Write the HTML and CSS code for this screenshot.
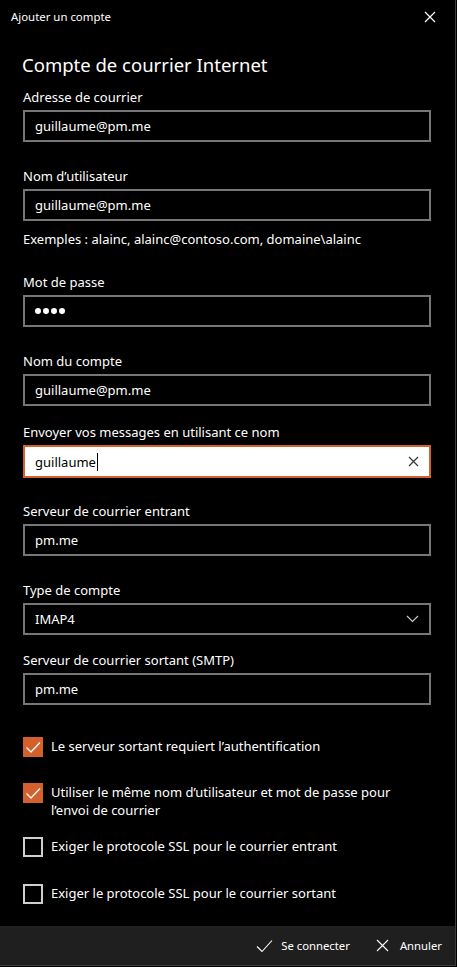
FILE: index.html
```html
<!DOCTYPE html>
<html lang="fr">
<head>
<meta charset="utf-8">
<title>Ajouter un compte</title>
<link rel="stylesheet" href="styles.css">
</head>
<body>
<div class="dialog">
  <div class="titlebar">
    <span class="title">Ajouter un compte</span>
    <svg class="close" width="12" height="12" viewBox="0 0 12 12"><path d="M1 1L11 11M11 1L1 11" stroke="#fff" stroke-width="1.2" fill="none"/></svg>
  </div>
  <div class="content">
    <h1 class="heading">Compte de courrier Internet</h1>

    <div class="field f1">
      <div class="label">Adresse de courrier</div>
      <div class="input">guillaume@pm.me</div>
    </div>

    <div class="field f2">
      <div class="label">Nom d’utilisateur</div>
      <div class="input">guillaume@pm.me</div>
      <div class="hint">Exemples : alainc, alainc@contoso.com, domaine\alainc</div>
    </div>

    <div class="field f3">
      <div class="label">Mot de passe</div>
      <div class="input"><span class="dots"><span class="dot"></span><span class="dot"></span><span class="dot"></span><span class="dot"></span></span></div>
    </div>

    <div class="field f4">
      <div class="label">Nom du compte</div>
      <div class="input">guillaume@pm.me</div>
    </div>

    <div class="field f5">
      <div class="label">Envoyer vos messages en utilisant ce nom</div>
      <div class="input focused">
        <span class="value">guillaume<span class="caret"></span></span>
        <svg class="clear" width="11" height="11" viewBox="0 0 11 11"><path d="M1 1L10 10M10 1L1 10" stroke="#333" stroke-width="1.2" fill="none"/></svg>
      </div>
    </div>

    <div class="field f6">
      <div class="label">Serveur de courrier entrant</div>
      <div class="input">pm.me</div>
    </div>

    <div class="field f7">
      <div class="label">Type de compte</div>
      <div class="input select">
        <span>IMAP4</span>
        <svg class="chev" width="13" height="8" viewBox="0 0 13 8"><path d="M1 1L6.5 6.5L12 1" stroke="#ccc" stroke-width="1.1" fill="none"/></svg>
      </div>
    </div>

    <div class="field f8">
      <div class="label">Serveur de courrier sortant (SMTP)</div>
      <div class="input">pm.me</div>
    </div>

    <div class="check c1">
      <span class="box checked"><svg width="20" height="20" viewBox="0 0 20 20"><path d="M3.5 10.5L8 15L17 5.5" stroke="#fff" stroke-width="1.3" fill="none"/></svg></span>
      <span class="ctext">Le serveur sortant requiert l’authentification</span>
    </div>
    <div class="check c2">
      <span class="box checked"><svg width="20" height="20" viewBox="0 0 20 20"><path d="M3.5 10.5L8 15L17 5.5" stroke="#fff" stroke-width="1.3" fill="none"/></svg></span>
      <span class="ctext">Utiliser le même nom d’utilisateur et mot de passe pour l’envoi de courrier</span>
    </div>
    <div class="check c3">
      <span class="box"></span>
      <span class="ctext">Exiger le protocole SSL pour le courrier entrant</span>
    </div>
    <div class="check c4">
      <span class="box"></span>
      <span class="ctext">Exiger le protocole SSL pour le courrier sortant</span>
    </div>
  </div>
  <div class="footer">
    <div class="btn">
      <svg width="17" height="14" viewBox="0 0 17 14"><path d="M1 7.5L6 12.5L16 1.5" stroke="#fff" stroke-width="1.1" fill="none"/></svg>
      <span>Se connecter</span>
    </div>
    <div class="btn btn-cancel">
      <svg width="13" height="13" viewBox="0 0 13 13"><path d="M1 1L12 12M12 1L1 12" stroke="#fff" stroke-width="1.1" fill="none"/></svg>
      <span>Annuler</span>
    </div>
  </div>
</div>
</body>
</html>
```
FILE: styles.css
```css
html, body {
  margin: 0;
  padding: 0;
  background: #000;
}
body {
  width: 457px;
  height: 967px;
  overflow: hidden;
  font-family: "Noto Sans", "Liberation Sans", sans-serif;
  color: #fff;
}
.dialog {
  width: 455px;
  height: 965px;
  border-right: 1px solid #3c3c3c;
  border-bottom: 1px solid #3c3c3c;
  background: #000;
  display: flex;
  flex-direction: column;
}
.titlebar {
  height: 34px;
  display: flex;
  align-items: center;
  justify-content: space-between;
  padding: 0 19px 0 11px;
  flex-shrink: 0;
}
.title {
  font-size: 11.4px;
  line-height: 16px;
}
.close {
  display: block;
}
.content {
  padding: 0 0 0 23px;
  flex: 1;
  font-size: 13px;
}
.heading {
  margin: 17px 0 0 -1px;
  font-weight: normal;
  font-size: 18.5px;
  line-height: 28px;
  height: 28px;
}
.label {
  line-height: 20px;
  height: 20px;
  margin-bottom: 3px;
}
.input {
  box-sizing: border-box;
  width: 408px;
  height: 32px;
  border: 2px solid #767676;
  padding: 0 10px;
  line-height: 28px;
  display: flex;
  align-items: center;
  justify-content: space-between;
}
.dots {
  display: flex;
  gap: 2px;
}
.dot {
  width: 6px;
  height: 6px;
  border-radius: 50%;
  background: #fff;
}
.input.focused {
  background: #fff;
  color: #000;
  border-color: #d4602c;
  height: 33px;
}
.value {
  display: flex;
  align-items: center;
}
.caret {
  display: inline-block;
  width: 1px;
  height: 18px;
  background: #000;
  margin-left: 1px;
}
.hint {
  line-height: 20px;
  margin-top: 8px;
}
.f1 { margin-top: 8px; }
.f2 { margin-top: 24px; }
.f3 { margin-top: 23px; }
.f4 { margin-top: 24px; }
.f5 { margin-top: 16px; }
.f6 { margin-top: 23px; }
.f7 { margin-top: 24px; }
.f8 { margin-top: 15px; }
.check {
  display: flex;
  align-items: flex-start;
  gap: 8px;
}
.box {
  box-sizing: border-box;
  width: 20px;
  height: 20px;
  flex-shrink: 0;
  border: 2px solid #cfcfcf;
}
.box.checked {
  border: none;
  background: #d4602c;
}
.box svg {
  display: block;
}
.ctext {
  line-height: 18px;
  width: 360px;
}
.c1 { margin-top: 32px; }
.c2 { margin-top: 26px; }
.c3 { margin-top: 18px; }
.c4 { margin-top: 27px; }
.footer {
  height: 39px;
  background: #1f1f1f;
  display: flex;
  justify-content: flex-end;
  align-items: center;
  gap: 26px;
  padding-right: 13px;
  flex-shrink: 0;
}
.btn {
  display: flex;
  align-items: center;
  gap: 8px;
  font-size: 11.3px;
}
.btn-cancel {
  gap: 11px;
}
.btn svg {
  display: block;
}
```
